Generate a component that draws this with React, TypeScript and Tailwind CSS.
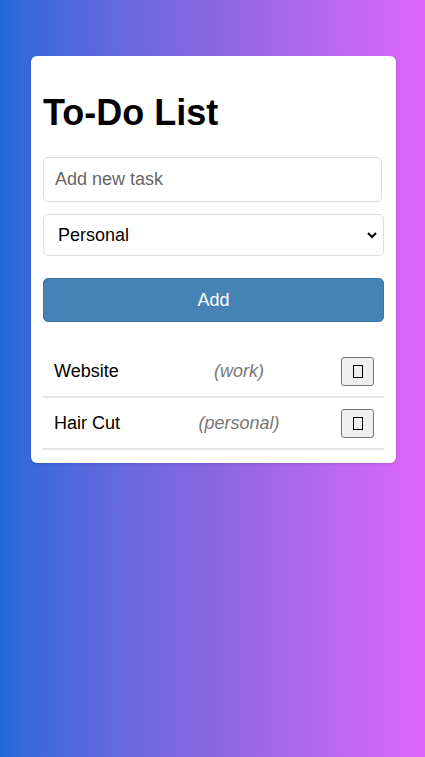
const tasks = [
  { name: "Website", category: "work" },
  { name: "Hair Cut", category: "personal" },
];

export default function App() {
  return (
    <div
      className="min-h-[757px] w-full bg-gradient-to-r from-[#1f69d8] via-[#8a66e4] to-[#de66fa] pt-[56px] px-[31px]"
      style={{ fontFamily: '"Liberation Sans", Arial, sans-serif' }}
    >
      <div className="w-[365px] bg-white rounded-[6px] shadow-sm px-[12px] pb-[13px]">
        <h1 className="text-[36px] font-bold text-black leading-[41px] pt-[36px] mb-[24px]">
          To-Do List
        </h1>

        <input
          type="text"
          placeholder="Add new task"
          className="block w-[339px] h-[45px] px-[11px] text-[18px] border border-[#dcdcdc] rounded-[5px] placeholder:text-[#666] outline-none"
        />

        <div className="relative mt-[12px] w-[341px]">
          <select className="block w-full h-[42px] pl-[14px] text-[18px] text-black border border-[#dcdcdc] rounded-[5px] bg-white appearance-none outline-none">
            <option>Personal</option>
            <option>Work</option>
          </select>
          <svg
            className="absolute right-[6px] top-[16px] w-[12px] h-[10px] pointer-events-none"
            viewBox="0 0 12 10"
            fill="none"
            stroke="black"
            strokeWidth="2"
          >
            <path d="M2 3l4 4 4-4" />
          </svg>
        </div>

        <button className="mt-[22px] w-[341px] h-[44px] bg-[#4682b4] border border-[#3d74a2] rounded-[5px] text-white text-[18px]">
          Add
        </button>

        <ul className="mt-[24px] w-[341px]">
          {tasks.map((task) => (
            <li
              key={task.name}
              className="h-[52px] flex items-center pl-[11px] pr-[10px] border-b-2 border-[#e6e6e6]"
            >
              <span className="w-[83px] text-[18px] text-black">{task.name}</span>
              <span className="flex-1 text-center text-[18px] italic text-[#777]">
                ({task.category})
              </span>
              <button className="w-[33px] h-[29px] flex items-center justify-center bg-[#efefef] border border-[#767676] rounded-[3px]">
                <span className="block w-[10px] h-[13px] border border-black" />
              </button>
            </li>
          ))}
        </ul>
      </div>
    </div>
  );
}
